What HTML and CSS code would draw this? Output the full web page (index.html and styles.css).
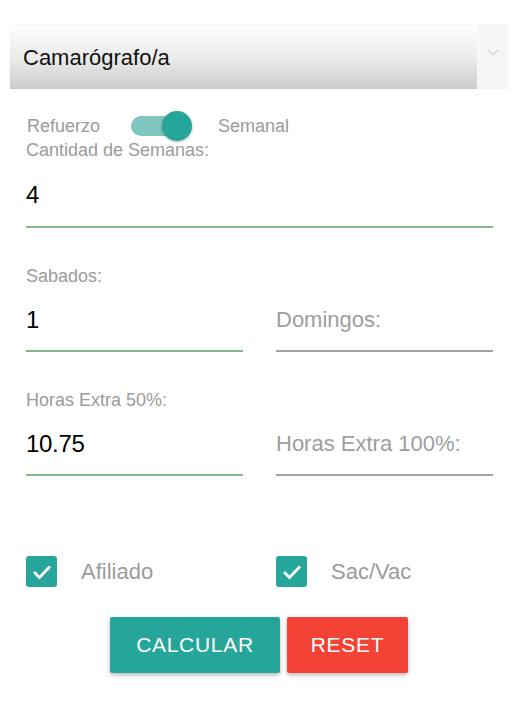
FILE: index.html
```html
<!DOCTYPE html>
<html lang="es">
<head>
<meta charset="utf-8">
<title>Calculadora</title>
<link rel="stylesheet" href="styles.css">
</head>
<body>
<div class="page">
  <div class="select">
    <div class="select-value">Camarógrafo/a</div>
    <div class="select-arrow">
      <svg width="12" height="8" viewBox="0 0 12 8"><path d="M1 1 L6 6 L11 1" fill="none" stroke="#d4d4d4" stroke-width="1.2"/></svg>
    </div>
  </div>

  <div class="form">
    <div class="toggle-row">
      <span class="toggle-label">Refuerzo</span>
      <span class="switch"><span class="track"></span><span class="thumb"></span></span>
      <span class="toggle-label">Semanal</span>
    </div>

    <div class="field first">
      <div class="label">Cantidad de Semanas:</div>
      <div class="input active">4</div>
    </div>

    <div class="pair">
      <div class="field">
        <div class="label">Sabados:</div>
        <div class="input active">1</div>
      </div>
      <div class="field">
        <div class="label"></div>
        <div class="input placeholder">Domingos:</div>
      </div>
    </div>

    <div class="pair">
      <div class="field">
        <div class="label">Horas Extra 50%:</div>
        <div class="input active">10.75</div>
      </div>
      <div class="field">
        <div class="label"></div>
        <div class="input placeholder">Horas Extra 100%:</div>
      </div>
    </div>

    <div class="checks">
      <div class="check">
        <span class="box"><svg width="20" height="16" viewBox="0 0 20 16"><path d="M2 8 L7.5 13.5 L18 2.5" fill="none" stroke="#fff" stroke-width="2.8"/></svg></span>
        <span class="check-label">Afiliado</span>
      </div>
      <div class="check">
        <span class="box"><svg width="20" height="16" viewBox="0 0 20 16"><path d="M2 8 L7.5 13.5 L18 2.5" fill="none" stroke="#fff" stroke-width="2.8"/></svg></span>
        <span class="check-label">Sac/Vac</span>
      </div>
    </div>
  </div>

  <div class="buttons">
    <button class="btn btn-calc">CALCULAR</button>
    <button class="btn btn-reset">RESET</button>
  </div>
</div>
</body>
</html>
```

FILE: styles.css
```css
* { box-sizing: border-box; }
html, body { margin: 0; padding: 0; background: #fff; }
body { font-family: "Liberation Sans", Arial, sans-serif; color: #000; }

.page { width: 521px; height: 713px; padding-top: 25px; }

.select {
  display: flex;
  height: 64px;
  margin: 0 13px 0 10px;
  box-shadow: 0 0 2px rgba(0,0,0,0.06);
}
.select-value {
  flex: 1;
  background: linear-gradient(#fefefe, #e9e9e9 55%, #cbcbcb);
  font-size: 22px;
  line-height: 66px;
  padding-left: 13px;
  color: #111;
}
.select-arrow {
  width: 31px;
  background: #f6f6f6;
  border-left: 1px solid #fbfbfb;
  display: flex;
  justify-content: center;
  padding-top: 24px;
}

.form { padding: 0 28px 0 26px; }

.toggle-row {
  display: flex;
  align-items: center;
  height: 22px;
  margin-top: 26px;
  padding-left: 1px;
}
.toggle-label { font-size: 18px; color: #9b9b9b; }
.switch {
  position: relative;
  width: 61px;
  height: 28px;
  margin: 0 26px 0 31px;
  display: inline-block;
}
.track {
  position: absolute;
  left: 0; top: 4px;
  width: 55px; height: 20px;
  border-radius: 10px;
  background: #7fc6be;
}
.thumb {
  position: absolute;
  left: 31px; top: -1px;
  width: 30px; height: 30px;
  border-radius: 50%;
  background: #26a69a;
  box-shadow: 0 1px 3px rgba(0,0,0,0.3);
}

.field .label {
  height: 20px;
  line-height: 20px;
  font-size: 18px;
  color: #9b9b9b;
}
.field.first .label { margin-top: 3px; }
.field .input {
  padding: 22px 0 18px 0;
  line-height: 24px;
  font-size: 24px;
  letter-spacing: -0.3px;
  border-bottom: 2px solid #a2a2a2;
}
.field.first .input { padding-top: 23px; padding-bottom: 19px; }
.input.active { border-bottom-color: #84b58b; }
.input.placeholder { color: #9e9e9e; font-size: 22px; letter-spacing: 0; }

.pair {
  display: grid;
  grid-template-columns: 217px 217px;
  column-gap: 33px;
  margin-top: 38px;
}

.checks {
  display: grid;
  grid-template-columns: 217px 217px;
  column-gap: 33px;
  margin-top: 80px;
}
.check { display: flex; align-items: center; height: 31px; }
.box {
  width: 31px; height: 31px;
  border-radius: 3px;
  background: #26a69a;
  display: flex;
  align-items: center;
  justify-content: center;
}
.check-label {
  margin-left: 24px;
  font-size: 22px;
  color: #9b9b9b;
}

.buttons {
  display: flex;
  justify-content: center;
  gap: 7px;
  margin-top: 30px;
  padding-right: 3px;
}
.btn {
  border: none;
  height: 56px;
  font-family: "Liberation Sans", Arial, sans-serif;
  font-size: 21px;
  letter-spacing: 0.7px;
  color: #fff;
  border-radius: 2px;
  box-shadow: 0 2px 4px rgba(0,0,0,0.28);
}
.btn-calc { width: 170px; background: #26a69a; }
.btn-reset { width: 121px; background: #f44336; }
```
